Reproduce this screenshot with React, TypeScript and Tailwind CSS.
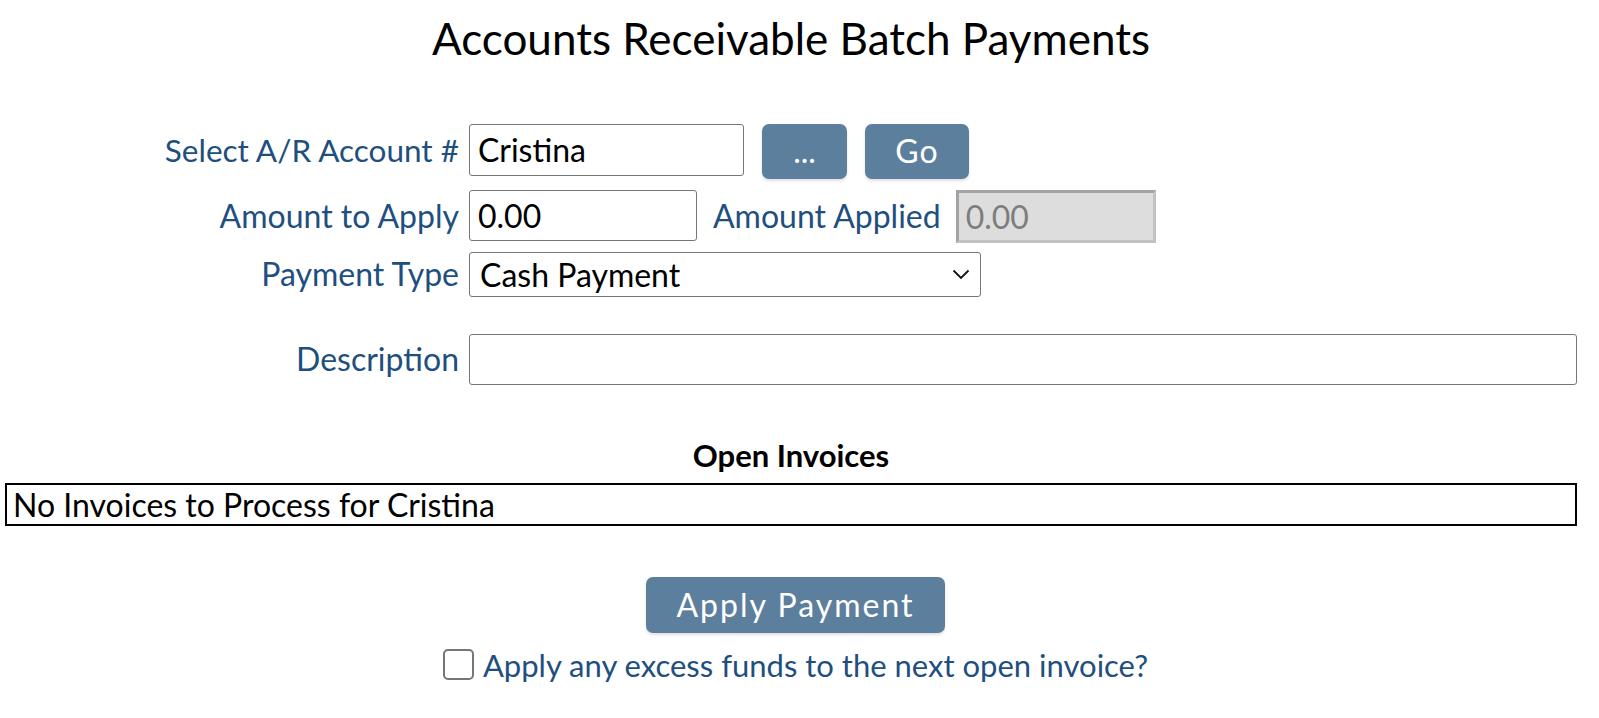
import { useState } from 'react';

const label = "text-right leading-[1.2] text-[#1e4f7e]";

export default function App() {
  const [account, setAccount] = useState('Cristina');
  const [amount, setAmount] = useState('0.00');
  const [desc, setDesc] = useState('');
  const [excess, setExcess] = useState(false);

  return (
    <div className="min-h-screen bg-white pl-[5px] pr-[22px] font-['Lato',_'Liberation_Sans',_sans-serif] text-black">
      {/* Title */}
      <h1 className="pt-[12px] text-center text-[44px] leading-[1.2] font-normal">Accounts Receivable Batch Payments</h1>

      {/* Form */}
      <div className="mt-[59px] flex flex-col">
        <div className="flex h-[55px] items-center gap-[10px]">
          <div className={`${label} w-[454px] text-[31.5px]`}>Select A/R Account #</div>
          <input
            value={account}
            onChange={e => setAccount(e.target.value)}
            className="h-[52px] w-[275px] self-start rounded-[3px] border border-[#767676] px-[8px] text-[32px] outline-none"
          />
          <button className="ml-[8px] h-[55px] w-[85px] rounded-[7px] bg-[#5d7f9e] text-[32px] text-white shadow-[0_2px_3px_rgba(0,0,0,0.12)]">...</button>
          <button className="ml-[8px] h-[55px] w-[104px] rounded-[7px] bg-[#5d7f9e] text-[32px] tracking-[1px] text-white shadow-[0_2px_3px_rgba(0,0,0,0.12)]">Go</button>
        </div>

        <div className="mt-[11px] flex h-[53px] items-center gap-[10px]">
          <div className={`${label} w-[454px] text-[32px]`}>Amount to Apply</div>
          <input
            value={amount}
            onChange={e => setAmount(e.target.value)}
            className="h-[51px] w-[228px] self-start rounded-[3px] border border-[#767676] px-[8px] text-[32px] outline-none"
          />
          <div className={`${label} ml-[6px] text-[32px]`}>Amount Applied</div>
          <input
            value="0.00"
            disabled
            className="ml-[5px] h-[53px] w-[200px] border-[3px] border-t-[#a3a3a3] border-l-[#a3a3a3] border-b-[#c2c2c2] border-r-[#c2c2c2] bg-[#dddddd] px-[7px] text-[32px] text-[#7d7d7d]"
          />
        </div>

        <div className="mt-[9px] flex h-[45px] items-center gap-[10px]">
          <div className={`${label} w-[454px] text-[32px]`}>Payment Type</div>
          <div className="relative h-[45px] w-[512px] rounded-[3px] border border-[#767676] bg-white">
            <div className="pl-[10px] text-[32px] leading-[43px]">Cash Payment</div>
            <svg className="absolute right-[10px] top-[16px]" width="18" height="11" viewBox="0 0 18 11" fill="none">
              <polyline points="1.5,1.5 9,9 16.5,1.5" stroke="#111" strokeWidth="1.8" />
            </svg>
          </div>
        </div>

        <div className="mt-[37px] flex h-[51px] items-center gap-[10px]">
          <div className={`${label} w-[454px] text-[32px]`}>Description</div>
          <input
            value={desc}
            onChange={e => setDesc(e.target.value)}
            className="h-[51px] flex-1 rounded-[3px] border border-[#767676] px-[8px] text-[32px] outline-none"
          />
        </div>
      </div>

      {/* Open invoices */}
      <h2 className="mt-[52px] text-center text-[31px] leading-[1.2] font-bold">Open Invoices</h2>
      <div className="mt-[9px] border-2 border-black px-[6px] text-[32px] leading-[39px]">
        No Invoices to Process for Cristina
      </div>

      {/* Actions */}
      <div className="mt-[51px] flex flex-col items-center pl-[9px]">
        <button className="h-[56px] w-[299px] rounded-[7px] bg-[#5d7f9e] text-[32px] tracking-[2px] text-white shadow-[0_2px_3px_rgba(0,0,0,0.12)]">
          Apply Payment
        </button>
        <label className="mt-[13px] flex items-start gap-[9px] text-[31px] leading-[1.2] text-[#1e4f7e]">
          <input
            type="checkbox"
            checked={excess}
            onChange={e => setExcess(e.target.checked)}
            className="mt-[3px] h-[31px] w-[31px] appearance-none rounded-[5px] border-2 border-[#767676] bg-white"
          />
          <span className="mt-[1px]">Apply any excess funds to the next open invoice?</span>
        </label>
      </div>
    </div>
  );
}
